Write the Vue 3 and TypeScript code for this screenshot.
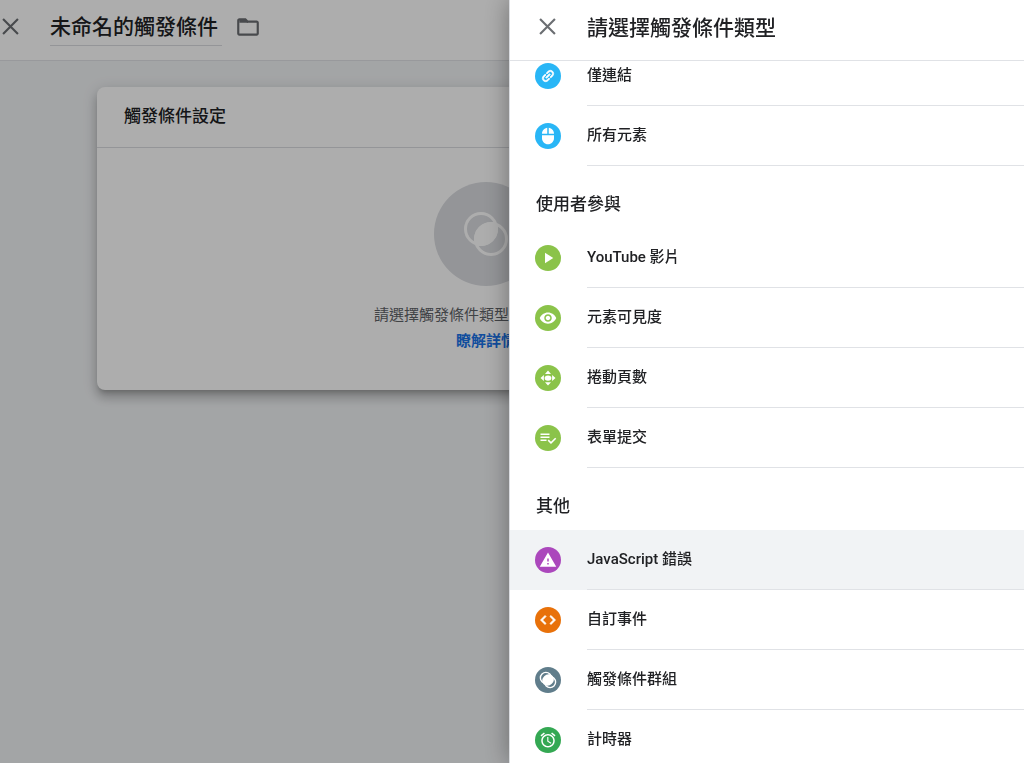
<script setup lang="ts">
import { ref } from 'vue'

type IconName =
  | 'link' | 'mouse' | 'play' | 'eye' | 'scroll' | 'form'
  | 'error' | 'code' | 'group' | 'timer'

interface TriggerType {
  label: string
  icon: IconName
  color: string
  active?: boolean
}

interface TriggerSection {
  title: string
  items: TriggerType[]
}

const triggerName = ref('未命名的觸發條件')

const sections: TriggerSection[] = [
  {
    title: '',
    items: [
      { label: '僅連結', icon: 'link', color: 'blue' },
      { label: '所有元素', icon: 'mouse', color: 'blue' },
    ],
  },
  {
    title: '使用者參與',
    items: [
      { label: 'YouTube 影片', icon: 'play', color: 'lime' },
      { label: '元素可見度', icon: 'eye', color: 'lime' },
      { label: '捲動頁數', icon: 'scroll', color: 'lime' },
      { label: '表單提交', icon: 'form', color: 'lime' },
    ],
  },
  {
    title: '其他',
    items: [
      { label: 'JavaScript 錯誤', icon: 'error', color: 'purple', active: true },
      { label: '自訂事件', icon: 'code', color: 'orange' },
      { label: '觸發條件群組', icon: 'group', color: 'slate' },
      { label: '計時器', icon: 'timer', color: 'green' },
    ],
  },
]
</script>

<template>
  <div class="page">
    <header class="bar page-bar">
      <button class="icon-btn" type="button" aria-label="關閉">
        <svg class="close" viewBox="0 0 16 16"><path d="M1 1L15 15M15 1L1 15" /></svg>
      </button>
      <input v-model="triggerName" class="name" type="text" aria-label="觸發條件名稱" />
      <button class="icon-btn folder-btn" type="button" aria-label="資料夾">
        <svg class="folder" viewBox="0 0 24 24">
          <path d="M9.170 6l2 2H20v10H4V6h5.170M10 4H4c-1.100 0-1.990.9-1.990 2L2 18c0 1.100.9 2 2 2h16c1.100 0 2-.9 2-2V8c0-1.100-.9-2-2-2h-8l-2-2z" />
          <path d="M4 5h6l2 2v1H4z" />
        </svg>
      </button>
    </header>

    <main class="content">
      <section class="card">
        <h2 class="card-title">觸發條件設定</h2>
        <div class="card-body">
          <div class="hero">
            <svg class="hero-icon" viewBox="0 0 52 52">
              <circle class="ring" cx="21" cy="21" r="15.500" />
              <circle class="ring" cx="31" cy="31" r="15.500" />
              <path class="lens" d="M36.930 15.070A17 17 0 0 1 15.070 36.930A17 17 0 0 1 36.930 15.070Z" />
            </svg>
          </div>
          <p class="hint">請選擇觸發條件類型</p>
          <a class="more" href="#">瞭解詳情</a>
        </div>
      </section>
    </main>

    <div class="scrim"></div>

    <aside class="panel">
      <header class="bar panel-bar">
        <button class="icon-btn" type="button" aria-label="關閉">
          <svg class="close" viewBox="0 0 16 16"><path d="M1 1L15 15M15 1L1 15" /></svg>
        </button>
        <h1 class="panel-title">請選擇觸發條件類型</h1>
      </header>

      <div class="scroller">
        <div class="list">
          <section v-for="section in sections" :key="section.title">
            <h2 v-if="section.title" class="group-title">{{ section.title }}</h2>
            <button
              v-for="item in section.items"
              :key="item.label"
              type="button"
              class="row"
              :class="{ active: item.active }"
            >
              <span class="badge" :class="item.color">
                <svg v-if="item.icon === 'link'" class="glyph bold tilted" viewBox="0 0 24 24">
                  <path d="M3.900 12c0-1.710 1.390-3.100 3.100-3.100h4V7H7c-2.760 0-5 2.240-5 5s2.240 5 5 5h4v-1.900H7c-1.710 0-3.100-1.390-3.100-3.100zM8 13h8v-2H8v2zm9-6h-4v1.900h4c1.710 0 3.100 1.390 3.100 3.100s-1.390 3.100-3.100 3.100h-4V17h4c2.760 0 5-2.240 5-5s-2.240-5-5-5z" />
                </svg>
                <svg v-else-if="item.icon === 'mouse'" class="glyph large" viewBox="0 0 24 24">
                  <path d="M13 1.070V9h7c0-4.080-3.050-7.440-7-7.930zM4 15c0 4.420 3.580 8 8 8s8-3.580 8-8v-4H4v4zm7-13.930C7.050 1.560 4 4.920 4 9h7V1.070z" />
                </svg>
                <svg v-else-if="item.icon === 'play'" class="glyph large" viewBox="0 0 24 24">
                  <path d="M8 5v14l11-7z" />
                </svg>
                <svg v-else-if="item.icon === 'eye'" class="glyph large" viewBox="0 0 24 24">
                  <path d="M12 4.500C7 4.500 2.730 7.610 1 12c1.730 4.390 6 7.500 11 7.500s9.270-3.110 11-7.500c-1.730-4.390-6-7.500-11-7.500zM12 17c-2.760 0-5-2.240-5-5s2.240-5 5-5 5 2.240 5 5-2.240 5-5 5zm0-8c-1.660 0-3 1.340-3 3s1.340 3 3 3 3-1.340 3-3-1.340-3-3-3z" />
                </svg>
                <svg v-else-if="item.icon === 'scroll'" class="glyph large" viewBox="0 0 24 24">
                  <path d="M12 2L16 6.500H8zM12 22L8 17.500H16zM2 12L6.500 8V16zM22 12L17.500 16V8z" />
                  <ellipse cx="12" cy="12" rx="4.500" ry="3.500" />
                </svg>
                <svg v-else-if="item.icon === 'form'" class="glyph large" viewBox="0 0 24 24">
                  <path d="M14 10H2v2h12v-2zm0-4H2v2h12V6zM2 16h8v-2H2v2zm19.500-4.500L23 13l-6.990 7-4.510-4.500L13 14l3.010 3 5.490-5.500z" />
                </svg>
                <svg v-else-if="item.icon === 'error'" class="glyph large" viewBox="0 0 24 24">
                  <path d="M1 21h22L12 2 1 21zm12-3h-2v-2h2v2zm0-4h-2v-4h2v4z" />
                </svg>
                <svg v-else-if="item.icon === 'code'" class="glyph bold large" viewBox="0 0 24 24">
                  <path d="M9.400 16.600L4.800 12l4.600-4.600L8 6l-6 6 6 6 1.400-1.400zm5.200 0l4.600-4.600-4.600-4.600L16 6l6 6-6 6-1.400-1.400z" />
                </svg>
                <svg v-else-if="item.icon === 'group'" class="glyph large" viewBox="0 0 52 52">
                  <circle class="ring thick" cx="20" cy="20" r="16" />
                  <circle class="ring thick" cx="32" cy="32" r="16" />
                  <path class="lens" d="M38.600 13.400A18 18 0 0 1 13.400 38.600A18 18 0 0 1 38.600 13.400Z" />
                </svg>
                <svg v-else class="glyph large" viewBox="0 0 24 24">
                  <path d="M22 5.720l-4.600-3.860-1.290 1.530 4.600 3.860L22 5.720zM7.880 3.390L6.600 1.860 2 5.710l1.290 1.530 4.590-3.850zM12.500 8H11v6l4.750 2.850.75-1.230-4-2.370V8zM12 4c-4.970 0-9 4.030-9 9s4.020 9 9 9c4.970 0 9-4.030 9-9s-4.030-9-9-9zm0 16c-3.870 0-7-3.130-7-7s3.130-7 7-7 7 3.130 7 7-3.130 7-7 7z" />
                </svg>
              </span>
              <span class="label">{{ item.label }}</span>
            </button>
          </section>
        </div>
      </div>
    </aside>
  </div>
</template>

<style>
body {
  margin: 0;
}
</style>

<style scoped>
.page {
  min-height: 100vh;
  background: #f1f3f5;
  color: #202124;
  font-family: Roboto, "Noto Sans CJK TC", sans-serif;
  font-size: 15px;
  overflow: hidden;
}

.page *,
.page {
  box-sizing: border-box;
}

button {
  padding: 0;
  border: 0;
  background: none;
  color: inherit;
  font: inherit;
  cursor: pointer;
}

h1,
h2,
p {
  margin: 0;
  font-weight: 500;
}

.bar {
  display: flex;
  align-items: center;
  height: 61px;
  padding-bottom: 8px;
  border-bottom: 1px solid #e0e2e6;
  background: #fff;
}

.page-bar {
  padding-left: 2px;
}

.icon-btn {
  display: flex;
  flex: none;
}

.close {
  width: 17px;
  height: 17px;
  fill: none;
  stroke: #6b6e72;
  stroke-width: 2;
}

.name {
  width: 172px;
  height: 40px;
  margin: 0 13px 0 31px;
  padding: 0 0 2px;
  border: 0;
  border-bottom: 1px solid #dadce0;
  outline: 0;
  background: none;
  color: inherit;
  font-family: inherit;
  font-size: 21px;
  font-weight: 500;
}

.folder-btn {
  padding-top: 2px;
}

.folder {
  width: 26px;
  height: 26px;
  fill: #6b6e72;
}

.content {
  padding: 26px 149px 26px 97px;
}

.card {
  border-radius: 8px;
  background: #fff;
  box-shadow:
    0 5px 5px -3px rgba(0, 0, 0, 0.2),
    0 8px 10px 1px rgba(0, 0, 0, 0.14),
    0 3px 14px 2px rgba(0, 0, 0, 0.12);
}

.card-title {
  height: 61px;
  padding-left: 27px;
  border-bottom: 1px solid #dadce0;
  font-size: 17px;
  line-height: 58px;
}

.card-body {
  display: flex;
  flex-direction: column;
  align-items: center;
  padding: 34px 0 36px;
  line-height: 26px;
}

.hero {
  display: flex;
  align-items: center;
  justify-content: center;
  width: 104px;
  height: 104px;
  margin-bottom: 16px;
  border-radius: 50%;
  background: #dadce0;
}

.hero-icon {
  width: 52px;
  height: 52px;
}

.ring {
  fill: none;
  stroke: #fff;
  stroke-width: 3;
}

.ring.thick {
  stroke-width: 4;
}

.lens {
  fill: #fff;
}

.hint {
  width: 224px;
  color: #5f6368;
  font-weight: 400;
}

.more {
  color: #1a73e8;
  font-weight: 700;
  text-decoration: none;
}

.scrim {
  position: fixed;
  inset: 0;
  background: rgba(0, 0, 0, 0.32);
}

.panel {
  position: fixed;
  top: 0;
  right: 0;
  bottom: 0;
  left: 509px;
  display: flex;
  flex-direction: column;
  border-left: 1px solid #dadce0;
  background: #fff;
  box-shadow: 0 0 24px rgba(0, 0, 0, 0.36);
}

.panel-bar {
  flex: none;
  padding-left: 29px;
}

.panel-title {
  margin-left: 31px;
  font-size: 21px;
}

.scroller {
  flex: 1;
  min-height: 0;
  overflow: hidden;
}

.list {
  margin-top: -15px;
}

.group-title {
  height: 62px;
  padding: 12px 26px 0;
  font-size: 17px;
  line-height: 52px;
}

.row {
  display: flex;
  align-items: center;
  width: 100%;
  height: 60px;
  padding-left: 25px;
  text-align: left;
}

.row.active {
  background: #f1f3f5;
}

.badge {
  display: flex;
  flex: none;
  align-items: center;
  justify-content: center;
  width: 26px;
  height: 26px;
  margin-right: 26px;
  border-radius: 50%;
}

.blue { background: #29b6f6; }
.lime { background: #8bc34a; }
.purple { background: #ab47bc; }
.orange { background: #e8710a; }
.slate { background: #607d8b; }
.green { background: #34a853; }

.glyph {
  width: 16px;
  height: 16px;
  fill: #fff;
}

.glyph.large {
  width: 18px;
  height: 18px;
}

.glyph.bold {
  stroke: #fff;
  stroke-width: 1;
}

.glyph.tilted {
  transform: rotate(-45deg);
}

.label {
  flex: 1;
  height: 60px;
  border-bottom: 1px solid #e0e2e6;
  font-weight: 500;
  line-height: 58px;
}
</style>
